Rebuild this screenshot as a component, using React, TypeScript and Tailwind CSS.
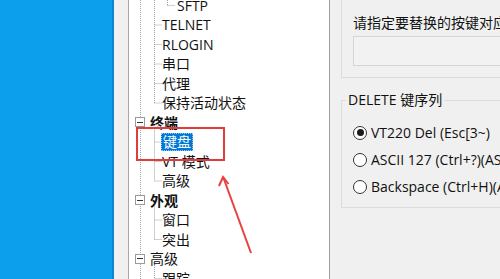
import React from 'react';

type Node = { label: string; level: 0 | 1 | 2; bold?: boolean; box?: boolean; selected?: boolean };

const nodes: Node[] = [
  { label: 'SFTP', level: 2 },
  { label: 'TELNET', level: 1 },
  { label: 'RLOGIN', level: 1 },
  { label: '串口', level: 1 },
  { label: '代理', level: 1 },
  { label: '保持活动状态', level: 1 },
  { label: '终端', level: 0, bold: true, box: true },
  { label: '键盘', level: 1, selected: true },
  { label: 'VT 模式', level: 1 },
  { label: '高级', level: 1 },
  { label: '外观', level: 0, bold: true, box: true },
  { label: '窗口', level: 1 },
  { label: '突出', level: 1 },
  { label: '高级', level: 0, box: true },
  { label: '跟踪', level: 1 },
];

const ROW = 19.5;
const FIRST = 5;

const TreeLines = () => {
  const cy = (i: number) => FIRST + i * ROW + 0.5;
  const dash = { stroke: '#a0a0a0', strokeWidth: 1, strokeDasharray: '1 1', fill: 'none' };
  return (
    <svg className="absolute inset-0" width="200" height="279">
      <line x1="11.5" y1="0" x2="11.5" y2="279" {...dash} />
      <line x1="25.5" y1="0" x2="25.5" y2={cy(5)} {...dash} />
      <line x1="25.5" y1={cy(6) + 6} x2="25.5" y2={cy(9)} {...dash} />
      <line x1="25.5" y1={cy(10) + 6} x2="25.5" y2={cy(12)} {...dash} />
      <line x1="25.5" y1={cy(13) + 6} x2="25.5" y2="279" {...dash} />
      <line x1="38.5" y1="0" x2="38.5" y2={cy(0)} {...dash} />
      <line x1="38.5" y1={cy(0)} x2="46" y2={cy(0)} {...dash} />
      {nodes.map((n, i) =>
        n.level === 1 ? <line key={i} x1="25.5" y1={cy(i)} x2="33" y2={cy(i)} {...dash} /> : null,
      )}
    </svg>
  );
};

const Minus = () => (
  <span className="ml-[6px] mr-[4px] flex h-[10px] w-[10px] shrink-0 items-center justify-center border border-[#9a9a9a] bg-white">
    <span className="h-px w-[6px] bg-[#333]" />
  </span>
);

const TreeRow = ({ n }: { n: Node }) => {
  const pad = n.level === 0 ? '' : n.level === 1 ? 'pl-[32px]' : 'pl-[47px]';
  return (
    <div className={`relative flex h-[19.5px] items-center whitespace-nowrap ${pad}`}>
      {n.box && <Minus />}
      {n.selected ? (
        <span className="border border-dotted border-[#9cc8f0] bg-[#0078d7] px-px leading-[16px] text-white">
          {n.label}
        </span>
      ) : (
        <span className={`px-px ${n.bold ? 'font-bold' : ''}`}>{n.label}</span>
      )}
    </div>
  );
};

const Radio = ({ checked, label }: { checked?: boolean; label: string }) => (
  <div className="flex h-[27px] items-center whitespace-nowrap">
    <span className="flex h-[14px] w-[14px] shrink-0 items-center justify-center rounded-full border border-[#333] bg-white">
      {checked && <span className="h-[7px] w-[7px] rounded-full bg-[#1a1a1a]" />}
    </span>
    <span className="ml-[4px] shrink-0">{label}</span>
  </div>
);

export default function App() {
  return (
    <div className="flex h-[279px] w-[500px] overflow-hidden font-['Open_Sans','Noto_Sans_CJK_SC',sans-serif] text-[14px] text-[#111]">
      <div className="w-[114px] shrink-0 border-r-2 border-[#0b86cf] bg-[#0c9feb]" />
      <div className="w-[15px] shrink-0 border-r border-[#a8a8a8] bg-[#f0f0f0]" />

      <div className="relative w-[200px] shrink-0 overflow-hidden bg-white">
        <TreeLines />
        <div className="relative mt-[-4.75px]">
          {nodes.map((n, i) => (
            <TreeRow key={i} n={n} />
          ))}
        </div>
        <div className="absolute left-[7px] top-[127px] h-[34px] w-[89px] border-2 border-[#e23b3b]" />
        <svg className="absolute inset-0" width="200" height="279">
          <line x1="122" y1="253" x2="94.5" y2="178" stroke="#e8413f" strokeWidth="2" />
          <polyline points="90,186 94,177 99.5,184" fill="none" stroke="#e8413f" strokeWidth="2" />
        </svg>
      </div>

      <div className="relative flex-1 overflow-hidden border-l border-[#a0a0a0] bg-[#f0f0f0]">
        <div className="ml-[11px] h-[78px] w-[200px] border-b border-l border-[#dcdcdc] pl-[11px]">
          <div className="whitespace-nowrap pt-[13px] leading-[20px]">请指定要替换的按键对应的字符串</div>
          <div className="mt-[3px] h-[30px] w-[200px] border border-[#d6d6d6] bg-[#f2f2f2]" />
        </div>

        <div className="relative ml-[11px] mt-[22px] h-[108px] w-[200px] border border-r-0 border-[#dcdcdc] pl-[11px]">
          <div className="absolute left-[4px] top-[-11px] whitespace-nowrap bg-[#f0f0f0] px-[2px] leading-[20px]">
            DELETE 键序列
          </div>
          <div className="pt-[18px]">
            <Radio checked label="VT220 Del (Esc[3~)" />
            <Radio label="ASCII 127 (Ctrl+?)(ASCII 127)" />
            <Radio label="Backspace (Ctrl+H)(ASCII 8)" />
          </div>
        </div>

        <div className="ml-[95px] mt-[71px] h-[4px] w-[14px] bg-[#dcdcdc]" />
      </div>
    </div>
  );
}
